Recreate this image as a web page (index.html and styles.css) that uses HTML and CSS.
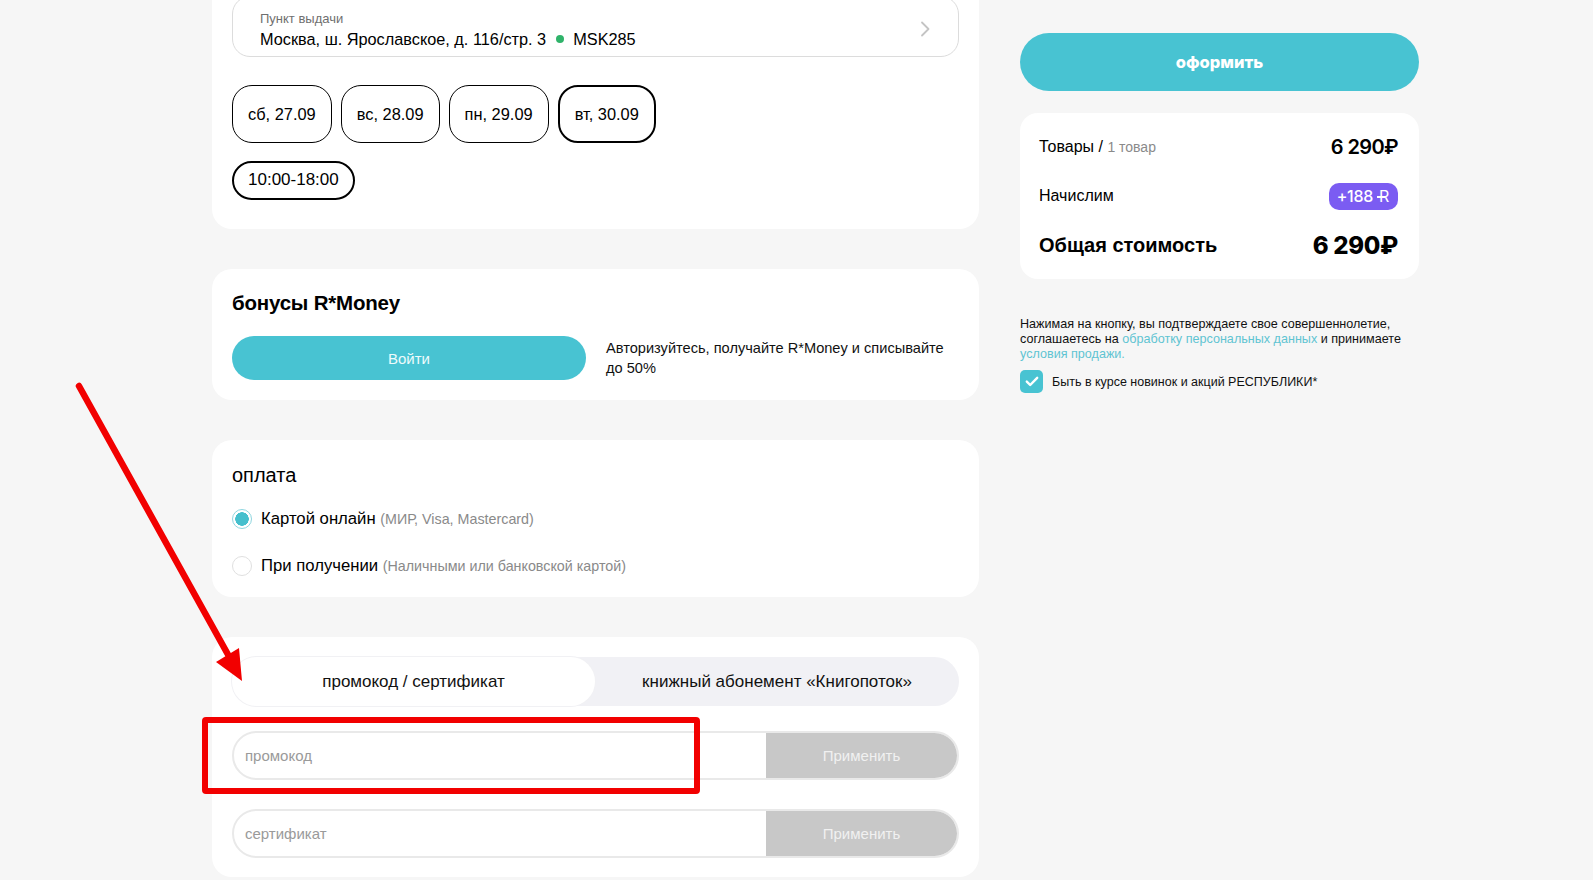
FILE: index.html
```html
<!DOCTYPE html>
<html lang="ru">
<head>
<meta charset="utf-8">
<title>Оформление заказа</title>
<link rel="stylesheet" href="styles.css">
</head>
<body>
<div class="page">
  <div class="main">
    <section class="card card-delivery">
      <div class="pickup">
        <div class="pickup-text">
          <div class="pickup-label">Пункт выдачи</div>
          <div class="pickup-address">Москва, ш. Ярославское, д. 116/стр. 3 <span class="dot"></span> MSK285</div>
        </div>
        <svg class="chevron" width="10" height="16" viewBox="0 0 10 16"><path d="M2 1.5 L8.5 8 L2 14.5" fill="none" stroke="#c4c4c4" stroke-width="1.8" stroke-linecap="round" stroke-linejoin="round"/></svg>
      </div>
      <div class="chips">
        <div class="chip">сб, 27.09</div>
        <div class="chip">вс, 28.09</div>
        <div class="chip">пн, 29.09</div>
        <div class="chip chip-active">вт, 30.09</div>
      </div>
      <div class="times">
        <div class="time-chip">10:00-18:00</div>
      </div>
    </section>

    <section class="card card-bonus">
      <h2 class="card-title bold">бонусы R*Money</h2>
      <div class="bonus-row">
        <button class="btn-login">Войти</button>
        <p class="bonus-text">Авторизуйтесь, получайте R*Money и списывайте до 50%</p>
      </div>
    </section>

    <section class="card card-pay">
      <h2 class="card-title">оплата</h2>
      <div class="radio-list">
        <div class="radio-row">
          <span class="radio radio-on"></span>
          <span class="radio-label">Картой онлайн <span class="muted">(МИР, Visa, Mastercard)</span></span>
        </div>
        <div class="radio-row">
          <span class="radio"></span>
          <span class="radio-label">При получении <span class="muted">(Наличными или банковской картой)</span></span>
        </div>
      </div>
    </section>

    <section class="card card-promo">
      <div class="tabs">
        <div class="tab tab-active">промокод / сертификат</div>
        <div class="tab">книжный абонемент «Книгопоток»</div>
      </div>
      <div class="code-row">
        <div class="code-input">промокод</div>
        <div class="code-btn">Применить</div>
      </div>
      <div class="code-row code-row-2">
        <div class="code-input">сертификат</div>
        <div class="code-btn">Применить</div>
      </div>
    </section>
  </div>

  <aside class="side">
    <button class="btn-order">оформить</button>
    <div class="summary">
      <div class="sum-row">
        <span class="sum-label">Товары / <span class="sum-count">1 товар</span></span>
        <span class="sum-price">6 290₽</span>
      </div>
      <div class="sum-row sum-row-2">
        <span class="sum-label">Начислим</span>
        <span class="badge">+188 <span class="rcur">R</span></span>
      </div>
      <div class="sum-row sum-row-3">
        <span class="sum-total-label">Общая стоимость</span>
        <span class="sum-total">6 290₽</span>
      </div>
    </div>
    <p class="legal">Нажимая на кнопку, вы подтверждаете свое совершеннолетие, соглашаетесь на <span class="link">обработку персональных данных</span> и принимаете <span class="link">условия продажи.</span></p>
    <div class="subscribe">
      <span class="checkbox"><svg width="14" height="11" viewBox="0 0 14 11"><path d="M1.8 5.6 L5.2 9 L12.2 1.8" fill="none" stroke="#fff" stroke-width="2.4" stroke-linecap="round" stroke-linejoin="round"/></svg></span>
      <span class="subscribe-text">Быть в курсе новинок и акций РЕСПУБЛИКИ*</span>
    </div>
  </aside>
</div>

<div class="annot-box"></div>
<svg class="annot-arrow" width="1593" height="880" viewBox="0 0 1593 880">
  <line x1="79" y1="386" x2="231" y2="660" stroke="#f20000" stroke-width="6.5" stroke-linecap="round"/>
  <polygon points="242,681 216,662 239,648" fill="#f20000"/>
</svg>
</body>
</html>
```

FILE: styles.css
```css
* { box-sizing: border-box; }

html, body { margin: 0; padding: 0; }

body {
  background: #f6f6f6;
  font-family: "Liberation Sans", Arial, sans-serif;
  color: #000;
  width: 1593px;
  height: 880px;
  overflow: hidden;
  position: relative;
}

.page {
  display: flex;
  align-items: flex-start;
  gap: 41px;
  padding-left: 212px;
}

.main {
  width: 767px;
  margin-top: -24px;
  display: flex;
  flex-direction: column;
  gap: 40px;
}

.card {
  background: #fff;
  border-radius: 20px;
  padding: 20px;
}

/* delivery */
.card-delivery { padding: 20px 20px 29px 20px; }

.pickup {
  border: 1px solid #dcdcdc;
  border-radius: 18px;
  padding: 14px 28px 7px 27px;
  display: flex;
  align-items: center;
  justify-content: space-between;
}

.pickup-label {
  font-size: 13px;
  line-height: 16px;
  color: #6f6f6f;
  margin-bottom: 2px;
}

.pickup-address {
  font-size: 16.3px;
  line-height: 20px;
  display: flex;
  align-items: center;
  white-space: pre;
}

.dot {
  display: inline-block;
  width: 8px;
  height: 8px;
  border-radius: 50%;
  background: #2fb36a;
  margin: 0 5px;
}

.chevron { margin-top: -3px; }

.chips {
  display: flex;
  gap: 9px;
  margin-top: 28px;
}

.chip {
  border: 1px solid #000;
  border-radius: 20px;
  padding: 18px 15px;
  font-size: 16.4px;
  line-height: 20px;
}

.chip-active {
  border-width: 2px;
  padding: 17px 15px;
}

.times {
  display: flex;
  margin-top: 18px;
}

.time-chip {
  border: 2px solid #000;
  border-radius: 20px;
  padding: 7px 14px 8px 14px;
  font-size: 17px;
  line-height: 20px;
}

/* titles */
.card-title {
  margin: 0;
  font-size: 20px;
  line-height: 24px;
  font-weight: 400;
}

.card-title.bold { font-size: 20.5px; font-weight: 700; letter-spacing: -0.2px; }

/* bonus */
.card-bonus { padding: 22px 20px 20px 20px; }

.bonus-row {
  display: flex;
  align-items: center;
  gap: 20px;
  margin-top: 21px;
}

.btn-login {
  width: 354px;
  height: 44px;
  border: none;
  border-radius: 22px;
  background: #48c3d2;
  color: #eefbfc;
  font-family: "Liberation Sans", Arial, sans-serif;
  font-size: 15px;
  padding: 0;
}

.bonus-text {
  margin: 0;
  width: 345px;
  font-size: 14.6px;
  line-height: 20px;
  color: #111;
}

/* pay */
.card-pay { padding: 23px 20px 19px 20px; }

.radio-list {
  display: flex;
  flex-direction: column;
  gap: 23px;
  margin-top: 20px;
}

.radio-row {
  display: flex;
  align-items: center;
  height: 24px;
  gap: 9px;
}

.radio {
  width: 20px;
  height: 20px;
  border-radius: 50%;
  border: 1.5px solid #e0e0e0;
  flex: none;
}

.radio-on {
  border-color: #8fd6df;
  background: radial-gradient(circle, #45bfcd 0 6.5px, #fff 7px);
}

.radio-label {
  font-size: 16.7px;
  line-height: 20px;
}

.muted {
  font-size: 14.3px;
  color: #8a8a8a;
}

/* promo */
.card-promo { padding: 20px 20px 19px 20px; }

.tabs {
  display: flex;
  height: 49px;
  border-radius: 25px;
  background: #f1f1f5;
}

.tab {
  flex: 1;
  display: flex;
  align-items: center;
  justify-content: center;
  font-size: 17px;
  color: #111;
  border-radius: 25px;
}

.tab-active {
  flex: none;
  width: 363px;
  background: #fff;
  box-shadow: 0 0 0 1px #f1f1f4;
}

.code-row {
  display: flex;
  height: 49px;
  margin-top: 25px;
  border: 2px solid #e9e9e9;
  border-radius: 25px;
  overflow: hidden;
}

.code-row-2 { margin-top: 29px; }

.code-input {
  flex: 1;
  display: flex;
  align-items: center;
  padding-left: 11px;
  font-size: 15px;
  color: #9a9a9a;
}

.code-btn {
  width: 191px;
  display: flex;
  align-items: center;
  justify-content: center;
  background: #c8c8c8;
  color: #f1f1f1;
  font-size: 15px;
}

/* side */
.side {
  width: 399px;
  padding-top: 33px;
}

.btn-order {
  display: block;
  width: 100%;
  height: 58px;
  border: none;
  border-radius: 29px;
  background: #48c3d2;
  color: #fff;
  font-family: Inter, "Liberation Sans", sans-serif;
  font-weight: 800;
  font-size: 16.5px;
  padding: 0;
}

.summary {
  margin-top: 22px;
  background: #fff;
  border-radius: 18px;
  padding: 21px 21px 19px 19px;
}

.sum-row {
  display: flex;
  justify-content: space-between;
  align-items: center;
  height: 26px;
}

.sum-row-2 { margin-top: 23px; }

.sum-row-3 { margin-top: 21px; height: 30px; }

.sum-label { font-size: 16px; }

.sum-count { font-size: 14px; color: #8a8a8a; }

.sum-price {
  font-family: Inter, "Liberation Sans", sans-serif;
  font-size: 20px;
  font-weight: 600;
  letter-spacing: -0.6px;
}

.badge {
  display: inline-flex;
  align-items: center;
  height: 27px;
  padding: 0 9px 0 8px;
  border-radius: 10px;
  background: #7b5cf2;
  color: #fff;
  font-family: Inter, "Liberation Sans", sans-serif;
  font-size: 16px;
  font-weight: 500;
  letter-spacing: -0.3px;
}

.rcur {
  position: relative;
  margin-left: 6px;
  font-weight: 400;
}

.rcur::after {
  content: "";
  position: absolute;
  left: -2px;
  top: 10px;
  width: 8px;
  height: 1.5px;
  background: #fff;
}

.sum-total-label {
  font-size: 20px;
  font-weight: 700;
}

.sum-total {
  font-family: Inter, "Liberation Sans", sans-serif;
  font-size: 24px;
  font-weight: 800;
  letter-spacing: -0.3px;
}

.legal {
  margin: 38px 0 0 0;
  font-size: 12.6px;
  line-height: 15px;
  color: #111;
}

.link { color: #5fc4d2; }

.subscribe {
  display: flex;
  align-items: center;
  gap: 9px;
  margin-top: 8px;
}

.checkbox {
  width: 23px;
  height: 23px;
  border-radius: 5px;
  background: #48c3d2;
  display: flex;
  align-items: center;
  justify-content: center;
  flex: none;
}

.subscribe-text {
  font-size: 12.5px;
  color: #111;
}

/* annotation overlays */
.annot-box {
  position: absolute;
  left: 202px;
  top: 717px;
  width: 498px;
  height: 77px;
  border: 6px solid #f20000;
  border-radius: 4px;
  pointer-events: none;
}

.annot-arrow {
  position: absolute;
  left: 0;
  top: 0;
  pointer-events: none;
}
```
